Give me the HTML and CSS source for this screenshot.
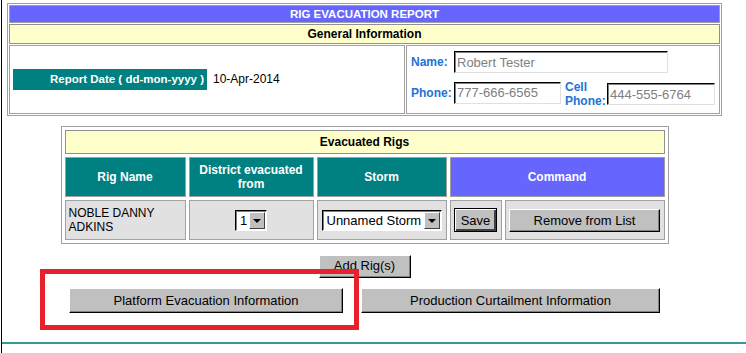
FILE: index.html
```html
<!DOCTYPE html>
<html lang="en">
<head>
    <meta charset="UTF-8">
    <title>Rig Evacuation Report</title>
    <link rel="stylesheet" href="styles.css">
</head>
<body>
    <div class="page">
        <div class="wrap">
            <table class="report">
                <tr><td colspan="2" class="title">RIG EVACUATION REPORT</td></tr>
                <tr><td colspan="2" class="section">General Information</td></tr>
                <tr>
                    <td class="date-cell">
                        <span class="date-label">Report Date ( dd-mon-yyyy )</span><span class="date-value">10-Apr-2014</span>
                    </td>
                    <td class="contact-cell">
                        <div class="contact">
                            <label class="lbl">Name:</label>
                            <input class="field field-name" type="text" value="Robert Tester">
                            <label class="lbl">Phone:</label>
                            <input class="field field-phone" type="text" value="777-666-6565">
                            <label class="lbl lbl-cell">Cell<br>Phone:</label>
                            <input class="field field-cell" type="text" value="444-555-6764">
                        </div>
                    </td>
                </tr>
            </table>

            <table class="rigs">
                <tr><td colspan="5" class="section">Evacuated Rigs</td></tr>
                <tr class="head">
                    <td class="col-rig">Rig Name</td>
                    <td class="col-district">District evacuated<br>from</td>
                    <td class="col-storm">Storm</td>
                    <td colspan="2" class="command">Command</td>
                </tr>
                <tr class="data">
                    <td class="rig-name">NOBLE DANNY<br>ADKINS</td>
                    <td class="center">
                        <span class="select select-district"><span class="select-text">1</span><span class="select-arrow"></span></span>
                    </td>
                    <td class="center">
                        <span class="select select-storm"><span class="select-text">Unnamed Storm</span><span class="select-arrow"></span></span>
                    </td>
                    <td class="center col-save"><button class="btn btn-save">Save</button></td>
                    <td class="center col-remove"><button class="btn btn-remove">Remove from List</button></td>
                </tr>
            </table>

            <div class="actions">
                <button class="btn btn-add">Add Rig(s)</button>
                <div class="nav">
                    <button class="btn btn-platform">Platform Evacuation Information</button>
                    <button class="btn btn-production">Production Curtailment Information</button>
                </div>
            </div>
        </div>
        <hr class="rule">
        <div class="annotation"></div>
    </div>
</body>
</html>
```

FILE: styles.css
```css
body {
    margin: 0;
    font-family: "Liberation Sans", Arial, sans-serif;
    font-size: 12px;
    color: #000;
    background: #fff;
}
.page {
    position: relative;
    margin-left: 1px;
    border-left: 1px solid #000;
    height: 353px;
    box-sizing: border-box;
    padding-top: 3px;
}
.wrap {
    width: 715px;
    margin-left: 5px;
}
table {
    border-collapse: separate;
    border: 1px solid #a0a0a0;
}
td {
    border: 1px solid #a0a0a0;
    padding: 0;
}
.report {
    width: 715px;
    border-spacing: 1px;
}
.title {
    height: 16px;
    background: #6666ff;
    color: #fff;
    font-weight: bold;
    font-size: 11.5px;
    text-align: center;
}
.section {
    background: #ffffcc;
    font-weight: bold;
    text-align: center;
    border-color: #909090;
}
.report .section {
    height: 18px;
}
.date-cell {
    width: 391px;
    height: 67px;
    padding-left: 3px;
    vertical-align: middle;
}
.date-label {
    display: inline-block;
    width: 191px;
    height: 21px;
    line-height: 21px;
    padding-right: 3px;
    background: #008080;
    color: #fff;
    font-weight: bold;
    font-size: 11.5px;
    text-align: right;
}
.date-value {
    margin-left: 6px;
}
.contact-cell {
    vertical-align: top;
    padding: 5px 0 0 4px;
}
.contact {
    display: grid;
    grid-template-columns: 43px 106px 47px 108px;
    grid-template-rows: 22px 23px;
    row-gap: 8px;
    align-items: center;
}
.lbl {
    color: #2273d6;
    font-weight: bold;
}
.lbl-cell {
    margin-left: 5px;
    line-height: 14px;
    padding-top: 2px;
}
.field {
    box-sizing: border-box;
    height: 22px;
    padding: 0 2px;
    font-family: "Liberation Sans", Arial, sans-serif;
    font-size: 13px;
    color: #808080;
    border: 1px solid;
    border-color: #000 #e0e0e0 #e0e0e0 #000;
    box-shadow: inset 1px 1px 0 #808080;
    background: #fff;
}
.field-name {
    grid-column: 2 / 5;
    width: 214px;
}
.field-phone {
    width: 107px;
}
.field-cell {
    width: 108px;
    margin-top: 3px;
}
.rigs {
    margin: 10px auto 0;
    border-spacing: 3px;
    width: 608px;
}
.rigs .section {
    height: 22px;
}
.head td {
    height: 38px;
    background: #008080;
    color: #fff;
    font-weight: bold;
    text-align: center;
}
.head .command {
    background: #6666ff;
}
.col-rig {
    width: 119px;
}
.col-district {
    width: 123px;
}
.col-storm {
    width: 128px;
}
.data td {
    height: 38px;
    background: #e1e1e1;
}
.rig-name {
    padding-left: 3px;
    line-height: 14px;
}
.center {
    text-align: center;
}
.col-save {
    width: 50px;
}
.select {
    display: inline-flex;
    box-sizing: border-box;
    height: 21px;
    vertical-align: middle;
    background: #fff;
    border: 1px solid;
    border-color: #000 #fff #fff #000;
    box-shadow: inset 1px 1px 0 #808080;
    text-align: left;
}
.select-district {
    width: 32px;
}
.select-storm {
    width: 120px;
    margin-top: 1px;
}
.select-text {
    flex: 1;
    padding-left: 4px;
    font-size: 13px;
    line-height: 19px;
}
.select-arrow {
    position: relative;
    width: 16px;
    margin: 1px 1px 1px 0;
    background: #c0c0c0;
    box-sizing: border-box;
    border: 1px solid;
    border-color: #fff #404040 #404040 #fff;
}
.select-arrow::after {
    content: "";
    position: absolute;
    left: 3px;
    top: 6px;
    border-left: 4px solid transparent;
    border-right: 4px solid transparent;
    border-top: 4px solid #000;
}
.btn {
    box-sizing: border-box;
    background: #c0c0c0;
    font-family: "Liberation Sans", Arial, sans-serif;
    font-size: 13px;
    line-height: 19px;
    color: #000;
    padding: 0;
    border: 1px solid;
    border-color: #fff #000 #000 #fff;
    box-shadow: inset -1px -1px 0 #808080;
}
.btn-save {
    width: 43px;
    height: 24px;
    border: 1px solid #000;
    box-shadow: inset 1px 1px 0 #fff, inset -2px -2px 0 #404040;
}
.btn-remove {
    width: 151px;
    height: 23px;
}
.actions {
    display: flex;
    flex-direction: column;
    align-items: center;
    margin-top: 11px;
}
.btn-add {
    width: 92px;
    height: 23px;
    padding-bottom: 2px;
}
.nav {
    display: flex;
    gap: 18px;
    margin-top: 10px;
}
.btn-platform {
    width: 274px;
    height: 25px;
}
.btn-production {
    width: 299px;
    height: 25px;
}
.rule {
    margin: 29px 0 0;
    border: 0;
    border-top: 2px solid #339999;
}
.annotation {
    position: absolute;
    left: 38px;
    top: 269px;
    width: 319px;
    height: 61px;
    box-sizing: border-box;
    border: 5px solid #e8202a;
}
```
